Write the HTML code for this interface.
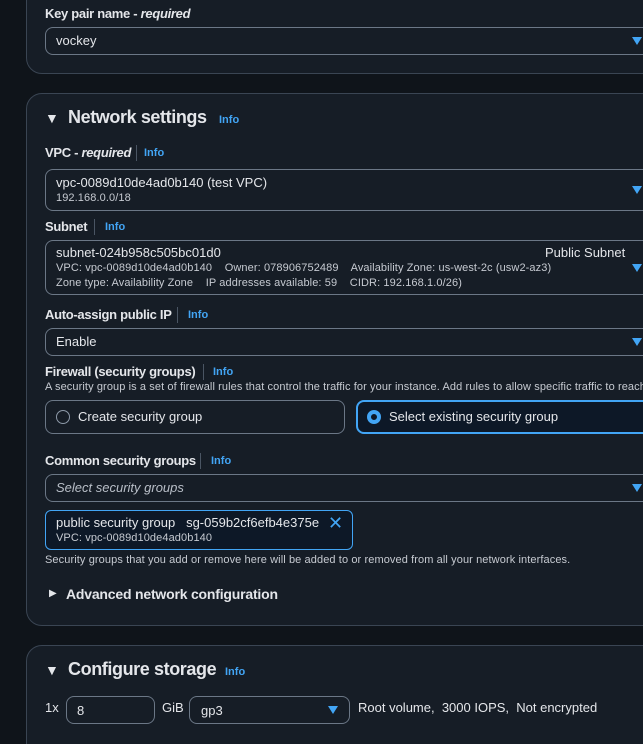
<!DOCTYPE html>
<html><head><meta charset="utf-8"><style>
*{margin:0;padding:0;box-sizing:border-box}
html,body{width:643px;height:744px;overflow:hidden}
body{background:#0f141a;position:relative;font-family:"Liberation Sans",sans-serif;color:#e4e6ea}
.a{position:absolute;white-space:nowrap}
.card{position:absolute;left:26px;width:640px;background:#161d26;border:1px solid #3a4553;border-radius:16px}
.inp{position:absolute;left:45px;width:620px;border:1px solid #6b7786;border-radius:8px;background:#161d26}
.lbl{font-weight:bold;font-size:13px;letter-spacing:-0.3px}
.info{color:#42a5f5;font-weight:bold;font-size:11px}
.sep{position:absolute;width:1px;height:16px;background:#4a5563}
.arr{position:absolute;left:632px;width:0;height:0;border-left:5px solid transparent;border-right:5px solid transparent;border-top:8px solid #42a5f5}
.t13{font-size:13px;letter-spacing:0}
.t11{font-size:11px;color:#c6cad1;letter-spacing:0.1px}
</style></head><body>
<div class="card" style="top:-20px;height:94px"></div>
<div class="a lbl" style="left:45px;top:6px">Key pair name - <i>required</i></div>
<div class="inp" style="top:27px;height:28px"></div>
<div class="a t13" style="left:56px;top:33px">vockey</div>
<div class="arr" style="top:37px"></div>

<div class="card" style="top:93px;height:533px"></div>
<div class="a" style="left:45px;top:110px;font-size:14px">▼</div>
<div class="a" style="left:68px;top:107px;font-size:18px;font-weight:bold;letter-spacing:-0.4px">Network settings</div>
<div class="a info" style="left:219px;top:114px">Info</div>

<div class="a lbl" style="left:45px;top:145px">VPC - <i>required</i></div>
<div class="sep" style="left:136px;top:145px"></div>
<div class="a info" style="left:144px;top:147px">Info</div>
<div class="inp" style="top:169px;height:42px"></div>
<div class="a t13" style="left:56px;top:175px">vpc-0089d10de4ad0b140 (test VPC)</div>
<div class="a t11" style="left:56px;top:192px">192.168.0.0/18</div>
<div class="arr" style="top:186px"></div>

<div class="a lbl" style="left:45px;top:219px">Subnet</div>
<div class="sep" style="left:94px;top:219px"></div>
<div class="a info" style="left:105px;top:221px">Info</div>
<div class="inp" style="top:240px;height:55px"></div>
<div class="a t13" style="left:56px;top:245px">subnet-024b958c505bc01d0</div>
<div class="a t13" style="left:545px;top:245px">Public Subnet</div>
<div class="a t11" style="left:56px;top:262px">VPC: vpc-0089d10de4ad0b140&nbsp;&nbsp;&nbsp; Owner: 078906752489&nbsp;&nbsp;&nbsp; Availability Zone: us-west-2c (usw2-az3)</div>
<div class="a t11" style="left:56px;top:277px">Zone type: Availability Zone&nbsp;&nbsp;&nbsp; IP addresses available: 59&nbsp;&nbsp;&nbsp; CIDR: 192.168.1.0/26)</div>
<div class="arr" style="top:264px"></div>

<div class="a lbl" style="left:45px;top:307px">Auto-assign public IP</div>
<div class="sep" style="left:177px;top:307px"></div>
<div class="a info" style="left:188px;top:309px">Info</div>
<div class="inp" style="top:328px;height:28px"></div>
<div class="a t13" style="left:56px;top:334px">Enable</div>
<div class="arr" style="top:338px"></div>

<div class="a lbl" style="left:45px;top:364px">Firewall (security groups)</div>
<div class="sep" style="left:203px;top:364px"></div>
<div class="a info" style="left:213px;top:366px">Info</div>
<div class="a t11" style="left:45px;top:381px">A security group is a set of firewall rules that control the traffic for your instance. Add rules to allow specific traffic to reach</div>
<div class="a" style="left:45px;top:400px;width:300px;height:34px;border:1px solid #6b7786;border-radius:8px"></div>
<div class="a" style="left:56px;top:410px;width:14px;height:14px;border:1px solid #8d99a8;border-radius:50%"></div>
<div class="a t13" style="left:78px;top:409px">Create security group</div>
<div class="a" style="left:356px;top:400px;width:300px;height:34px;border:2px solid #42a5f5;border-radius:8px;background:#0d1827"></div>
<div class="a" style="left:367px;top:410px;width:14px;height:14px;border:4px solid #42a5f5;border-radius:50%;background:#0d1827"></div>
<div class="a t13" style="left:389px;top:409px">Select existing security group</div>

<div class="a lbl" style="left:45px;top:453px">Common security groups</div>
<div class="sep" style="left:200px;top:453px"></div>
<div class="a info" style="left:211px;top:455px">Info</div>
<div class="inp" style="top:474px;height:28px"></div>
<div class="a t13" style="left:56px;top:480px;font-style:italic;color:#b8bec7">Select security groups</div>
<div class="arr" style="top:484px"></div>
<div class="a" style="left:45px;top:510px;width:308px;height:40px;border:1px solid #42a5f5;border-radius:6px;background:#0d1827"></div>
<div class="a t13" style="left:56px;top:515px">public security group&nbsp;&nbsp; sg-059b2cf6efb4e375e</div>
<div class="a" style="left:328px;top:513px;font-size:18px;color:#42a5f5">✕</div>
<div class="a t11" style="left:56px;top:532px">VPC: vpc-0089d10de4ad0b140</div>
<div class="a t11" style="left:45px;top:554px">Security groups that you add or remove here will be added to or removed from all your network interfaces.</div>
<div class="a" style="left:49px;top:588px;font-size:10px">▶</div>
<div class="a" style="left:66px;top:586px;font-size:14px;font-weight:bold;letter-spacing:-0.2px">Advanced network configuration</div>

<div class="card" style="top:645px;height:120px"></div>
<div class="a" style="left:45px;top:662px;font-size:14px">▼</div>
<div class="a" style="left:68px;top:659px;font-size:18px;font-weight:bold;letter-spacing:-0.4px">Configure storage</div>
<div class="a info" style="left:225px;top:666px">Info</div>
<div class="a t13" style="left:45px;top:700px">1x</div>
<div class="a" style="left:66px;top:696px;width:89px;height:28px;border:1px solid #6b7786;border-radius:8px"></div>
<div class="a t13" style="left:77px;top:703px">8</div>
<div class="a t13" style="left:162px;top:700px">GiB</div>
<div class="a" style="left:189px;top:696px;width:161px;height:28px;border:1px solid #6b7786;border-radius:8px"></div>
<div class="a t13" style="left:201px;top:703px">gp3</div>
<div class="a" style="left:328px;top:706px;border-left:5px solid transparent;border-right:5px solid transparent;border-top:8px solid #42a5f5"></div>
<div class="a t13" style="left:358px;top:700px">Root volume,&nbsp; 3000 IOPS,&nbsp; Not encrypted</div>
</body></html>
